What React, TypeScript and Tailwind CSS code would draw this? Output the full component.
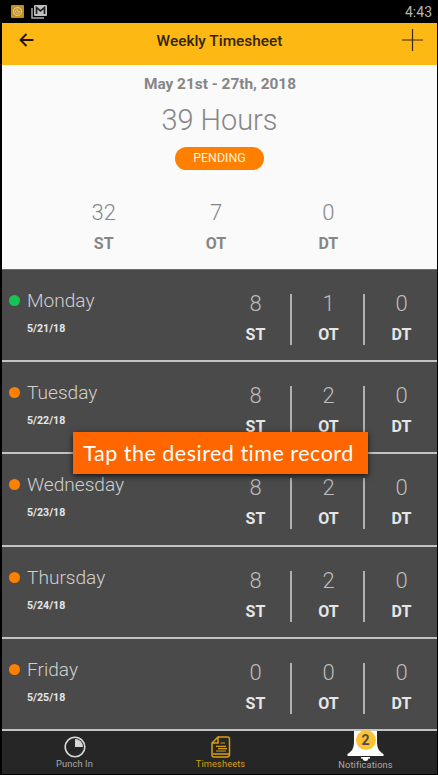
import { clsx } from 'clsx';

interface TimeRecord {
  day: string;
  date: string;
  st: number;
  ot: number;
  dt: number;
  approved?: boolean;
}

const records: TimeRecord[] = [
  { day: 'Monday', date: '5/21/18', st: 8, ot: 1, dt: 0, approved: true },
  { day: 'Tuesday', date: '5/22/18', st: 8, ot: 2, dt: 0 },
  { day: 'Wednesday', date: '5/23/18', st: 8, ot: 2, dt: 0 },
  { day: 'Thursday', date: '5/24/18', st: 8, ot: 2, dt: 0 },
  { day: 'Friday', date: '5/25/18', st: 0, ot: 0, dt: 0 },
];

const totals = [
  { label: 'ST', value: 32 },
  { label: 'OT', value: 7 },
  { label: 'DT', value: 0 },
];

function StatusBar() {
  return (
    <div className="flex h-[23px] items-center justify-between bg-black pl-[9px] pr-[5px]">
      <div className="flex items-center gap-[7px]">
        <svg width="13" height="13" viewBox="0 0 13 13" fill="none">
          <rect width="13" height="13" rx="1" fill="#c38e22" />
          <circle cx="6.5" cy="6.5" r="4" stroke="#dcc38a" strokeWidth="1.3" />
          <path d="M6.5 6.5V4.8M6.5 6.5h2a2 2 0 1 1-2-2" stroke="#dcc38a" strokeWidth="1" />
        </svg>
        <svg width="16" height="14" viewBox="0 0 16 14" fill="none">
          <path d="M1 3v10h12" stroke="#aaa" strokeWidth="1.5" />
          <rect x="3" y="0" width="13" height="11" rx="1" fill="#c0c0c0" />
          <path d="M5.5 9V2.5l4 3.3 4-3.3V9" stroke="#222" strokeWidth="1.7" />
        </svg>
      </div>
      <span className="text-[14px] leading-none text-[#b5b5b5]">4:43</span>
    </div>
  );
}

function Header() {
  return (
    <div className="flex h-[42px] items-center justify-between bg-[#fdb813] pb-[8px] pl-[17px] pr-[14px]">
      <svg width="15" height="14" viewBox="0 0 15 14" fill="none" stroke="#1c1400" strokeWidth="1.8">
        <path d="M14.5 7H1.5M7.5 1l-6 6 6 6" />
      </svg>
      <h1 className="ml-[3px] mt-[4px] w-[128px] whitespace-nowrap text-center text-[15.4px] font-medium leading-none text-[#332503]">
        Weekly Timesheet
      </h1>
      <svg width="21" height="22" viewBox="0 0 21 22" fill="none" stroke="#3a2b08" strokeWidth="1.2">
        <path d="M10.5 0v22M0 11h21" />
      </svg>
    </div>
  );
}

function Summary() {
  return (
    <section className="flex h-[204px] flex-col items-center bg-[#fafafa] text-[#868686]">
      <p className="mt-[10px] pl-[1px] text-[15.4px] font-bold leading-[18px]">May 21st - 27th, 2018</p>
      <p className="mt-[10px] text-[28.9px] font-light leading-[34px]">39 Hours</p>
      <span className="mt-[10px] flex h-[23px] w-[89px] items-center justify-center rounded-full bg-[#ff8000] text-[12.4px] text-[#fff0df]">
        PENDING
      </span>
      <div className="mr-[7px] mt-[30px] grid w-[337px] grid-cols-3 text-center">
        {totals.map((total) => (
          <div key={total.label}>
            <p className="text-[22px] font-light leading-[26px]">{total.value}</p>
            <p className="mt-[9px] text-[16px] font-bold leading-[18px]">{total.label}</p>
          </div>
        ))}
      </div>
    </section>
  );
}

function HourCell({ value, label, divided }: { value: number; label: string; divided?: boolean }) {
  return (
    <div className={clsx('h-[51px] w-[73px] text-center', divided ? 'border-l-2 border-[#b0b0b0] pl-[2px]' : 'pl-[4px]')}>
      <p className="text-[22px] font-light leading-[19px] text-[#bdbdbd]">{value}</p>
      <p className="mt-[14px] text-[16px] font-bold leading-[16px] text-[#e6e6e6]">{label}</p>
    </div>
  );
}

function RecordRow({ record }: { record: TimeRecord }) {
  return (
    <div className="flex h-[92.2px] border-b-2 border-[#c3c3c3] bg-[#4a4a4a] pl-[7px]">
      <span className={clsx('mt-[25px] size-[11px] shrink-0 rounded-full', record.approved ? 'bg-[#16c451]' : 'bg-[#ff8000]')} />
      <div className="ml-[7px] mt-[18px] flex-1">
        <p className="text-[19.1px] font-light leading-[26px] text-[#d0d0d0]">{record.day}</p>
        <p className="mt-[9px] text-[10.6px] font-bold leading-[12px] text-[#e6e6e6]">{record.date}</p>
      </div>
      <div className="mr-[1px] mt-[24px] flex">
        <HourCell value={record.st} label="ST" />
        <HourCell value={record.ot} label="OT" divided />
        <HourCell value={record.dt} label="DT" divided />
      </div>
    </div>
  );
}

function TabBar() {
  return (
    <nav className="grid h-[43px] grid-cols-3 bg-[#262626] text-[9.3px] leading-[12px] tracking-[0.1px] text-[#a9a9a9]">
      <div className="flex flex-col items-center pt-[5px]">
        <svg width="22" height="22" viewBox="0 0 22 22" fill="none">
          <circle cx="11" cy="11" r="9.8" stroke="#d6d6d6" strokeWidth="1.6" />
          <path d="M11 11V3a8 8 0 0 1 8 8z" fill="#d6d6d6" />
        </svg>
        <span>Punch In</span>
      </div>
      <div className="flex flex-col items-center pl-[2px] pt-[5px] text-[#d79e12]">
        <svg width="20" height="22" viewBox="0 0 20 22" fill="none" stroke="currentColor" strokeWidth="1.5">
          <path d="M7 1h9.5q2 0 2 2v15q0 3-2.5 3H3q-2 0-2-2V7l6-6v6H1M2 18h16" />
          <path d="M9.5 7H14M5 10.3h10M7 12.6h9M5 15h10" strokeWidth="1.2" />
        </svg>
        <span>Timesheets</span>
      </div>
      <div className="relative flex flex-col items-center pl-[2px]">
        <svg width="37" height="30" viewBox="0 0 37 30" fill="#fff">
          <path d="M7 0h23v10c0 8 2 10 6.5 13v2H.5v-2C5 20 7 18 7 10zM14 26h9v1.5h-1.5Q21 30 18.500 30T15.500 27.500H14z" />
        </svg>
        <span className="absolute -top-px flex h-[20px] w-[20px] items-center justify-center rounded-full bg-[#fec233] text-[14px] font-bold text-[#4d4d4d]">
          2
        </span>
        <span className="-mt-[2px]">Notifications</span>
      </div>
    </nav>
  );
}

export default function App() {
  return (
    <main className="relative h-[775px] w-[438px] overflow-hidden border-l-2 border-r border-black bg-black font-[Roboto,sans-serif]">
      <StatusBar />
      <Header />
      <Summary />
      <div className="border-t border-[#6b6b6b]">
        {records.map((record) => (
          <RecordRow key={record.date} record={record} />
        ))}
      </div>
      <TabBar />
      <div className="absolute left-[71px] top-[432px] flex h-[42px] w-[295px] items-center justify-center whitespace-nowrap bg-[#ff6600] pr-[4px] font-[Lato,sans-serif] text-[21.5px] tracking-[0.5px] text-white shadow-[0_2px_6px_rgba(0,0,0,0.7)]">
        Tap the desired time record
      </div>
    </main>
  );
}
